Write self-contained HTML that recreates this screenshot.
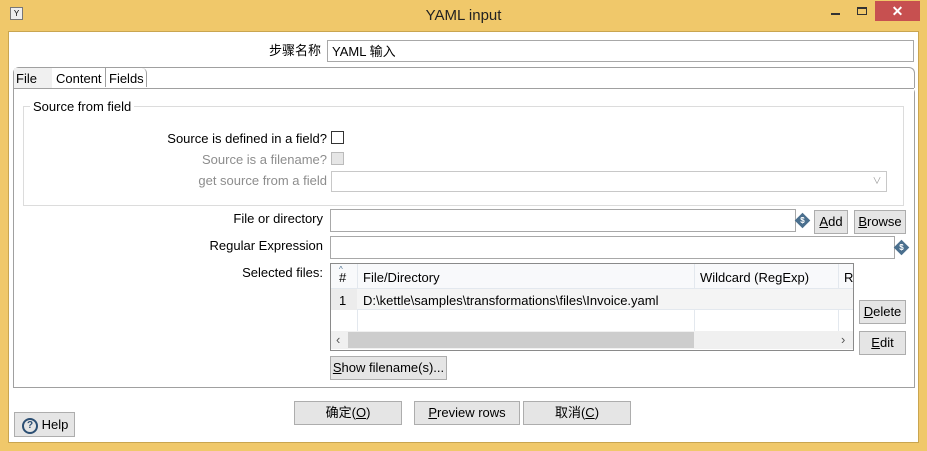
<!DOCTYPE html>
<html><head><meta charset="utf-8"><style>
*{box-sizing:border-box;margin:0;padding:0}
body{width:927px;height:451px;background:#f0c86a;font-family:"Liberation Sans","Noto Sans CJK SC",sans-serif;font-size:13px;line-height:15px;color:#000;position:relative;overflow:hidden}
.a{position:absolute}
.client{left:8px;top:31px;width:911px;height:412px;background:#fff;border:1px solid #c9a550}
.inp{position:absolute;background:#fff;border:1px solid #a8a8a8;height:23px}
.btn{position:absolute;background:#e5e5e5;border:1px solid #adadad;text-align:center;line-height:21px;height:24px}
.lbl{position:absolute;text-align:right;white-space:nowrap}
.dol{position:absolute;width:11px;height:11px;background:#4a6f8e;transform:rotate(45deg);}
.dol span{display:block;transform:rotate(-45deg);color:#fff;font-size:8px;line-height:11px;text-align:center;font-weight:bold}
u{text-decoration:underline}
</style></head><body>
<div class="a" style="left:10px;top:7px;width:13px;height:13px;border:1px solid #777;background:#eee;font-size:8px;text-align:center;line-height:11px">Y</div>
<div class="a" style="left:0;width:927px;top:7px;text-align:center;font-size:15px;line-height:18px;color:#222">YAML input</div>
<div class="a" style="left:831px;top:13px;width:9px;height:2px;background:#333"></div>
<div class="a" style="left:857px;top:7px;width:10px;height:8px;border:1px solid #333;border-top-width:2px"></div>
<div class="a" style="left:875px;top:1px;width:45px;height:20px;background:#c75050;color:#fff;text-align:center;font-size:14px;line-height:20px;font-weight:bold">✕</div>
<div class="a client"></div>

<div class="lbl" style="right:606px;top:43px">步骤名称</div>
<div class="inp" style="left:327px;top:40px;width:587px;height:22px;padding:3px 4px;line-height:15px">YAML 输入</div>

<div class="a" style="left:13px;top:87px;width:902px;height:301px;border:1px solid #a0a0a0;border-radius:0 6px 0 0"></div>
<div class="a" style="left:13px;top:67px;width:902px;height:21px;border:1px solid #a0a0a0;border-bottom:none;border-radius:6px 6px 0 0;background:#fff"></div>
<div class="a" style="left:14px;top:68px;width:38px;height:20px;background:#f0f0f0;padding:3px 2px">File</div>
<div class="a" style="left:52px;top:68px;width:54px;height:19px;border-right:1px solid #a0a0a0;padding:3px 4px">Content</div>
<div class="a" style="left:106px;top:68px;width:41px;height:19px;border-right:1px solid #a0a0a0;border-radius:0 5px 0 0;padding:3px 3px">Fields</div>
<div class="a" style="left:14px;top:88px;width:900px;height:299px;background:#fff;border-top:1px solid #a0a0a0"></div>

<div class="a" style="left:23px;top:106px;width:881px;height:100px;border:1px solid #dcdcdc"></div>
<div class="a" style="left:30px;top:99px;background:#fff;padding:0 3px">Source from field</div>
<div class="lbl" style="right:600px;top:131px">Source is defined in a field?</div>
<div class="a" style="left:331px;top:131px;width:13px;height:13px;border:1px solid #333;background:#fff"></div>
<div class="lbl" style="right:600px;top:152px;color:#8d8d8d">Source is a filename?</div>
<div class="a" style="left:331px;top:152px;width:13px;height:13px;border:1px solid #bbb;background:#e6e6e6"></div>
<div class="lbl" style="right:600px;top:173px;color:#8d8d8d">get source from a field</div>
<div class="inp" style="left:331px;top:171px;width:556px;height:21px;border-color:#c8c8c8"></div>
<div class="a" style="left:869px;top:173px;width:16px;height:17px;color:#999;font-size:9px;text-align:center;line-height:17px">∨</div>

<div class="lbl" style="right:604px;top:211px">File or directory</div>
<div class="inp" style="left:330px;top:209px;width:466px"></div>
<div class="dol" style="left:797px;top:215px"><span>$</span></div>
<div class="btn" style="left:814px;top:210px;width:34px"><u>A</u>dd</div>
<div class="btn" style="left:854px;top:210px;width:52px"><u>B</u>rowse</div>

<div class="lbl" style="right:604px;top:238px">Regular Expression</div>
<div class="inp" style="left:330px;top:236px;width:565px"></div>
<div class="dol" style="left:896px;top:242px"><span>$</span></div>

<div class="lbl" style="right:604px;top:265px">Selected files:</div>
<div class="a" style="left:330px;top:263px;width:524px;height:88px;border:1px solid #8a8a8a;background:#fff;overflow:hidden">
  <div class="a" style="left:0;top:0;width:524px;height:25px;background:#f8f9fb;border-bottom:1px solid #e3e8ee"></div>
  <div class="a" style="left:8px;top:6px">#</div>
  <div class="a" style="left:8px;top:-2px;font-size:8px;color:#4a6f8e">^</div>
  <div class="a" style="left:26px;top:0;width:1px;height:70px;background:#e3e8ee"></div>
  <div class="a" style="left:32px;top:6px">File/Directory</div>
  <div class="a" style="left:363px;top:0;width:1px;height:70px;background:#e3e8ee"></div>
  <div class="a" style="left:369px;top:6px">Wildcard (RegExp)</div>
  <div class="a" style="left:507px;top:0;width:1px;height:70px;background:#e3e8ee"></div>
  <div class="a" style="left:513px;top:6px">R</div>
  <div class="a" style="left:0;top:25px;width:524px;height:21px;background:#f4f4f4;border-bottom:1px solid #e3e8ee"></div>
  <div class="a" style="left:0;top:25px;width:26px;height:21px;background:#ececec"></div>
  <div class="a" style="left:8px;top:29px">1</div>
  <div class="a" style="left:32px;top:29px">D:\kettle\samples\transformations\files\Invoice.yaml</div>
  <div class="a" style="left:0;top:67px;width:524px;height:18px;background:#f0f0f0"></div>
  <div class="a" style="left:17px;top:68px;width:346px;height:16px;background:#cdcdcd"></div>
  <div class="a" style="left:5px;top:68px;color:#555">‹</div>
  <div class="a" style="left:510px;top:68px;color:#555">›</div>
</div>
<div class="btn" style="left:859px;top:300px;width:47px"><u>D</u>elete</div>
<div class="btn" style="left:859px;top:331px;width:47px"><u>E</u>dit</div>
<div class="btn" style="left:330px;top:356px;width:117px"><u>S</u>how filename(s)...</div>

<div class="btn" style="left:294px;top:401px;width:108px">确定(<u>O</u>)</div>
<div class="btn" style="left:414px;top:401px;width:106px"><u>P</u>review rows</div>
<div class="btn" style="left:523px;top:401px;width:108px">取消(<u>C</u>)</div>
<div class="btn" style="left:14px;top:412px;width:61px;height:25px;line-height:23px;text-align:left;padding-left:7px;white-space:nowrap"><span style="display:inline-block;width:16px;height:16px;border:2px solid #2c4f73;border-radius:50%;font-size:10px;line-height:12px;text-align:center;color:#2c4f73;font-weight:bold;vertical-align:middle">?</span> Help</div>
</body></html>
